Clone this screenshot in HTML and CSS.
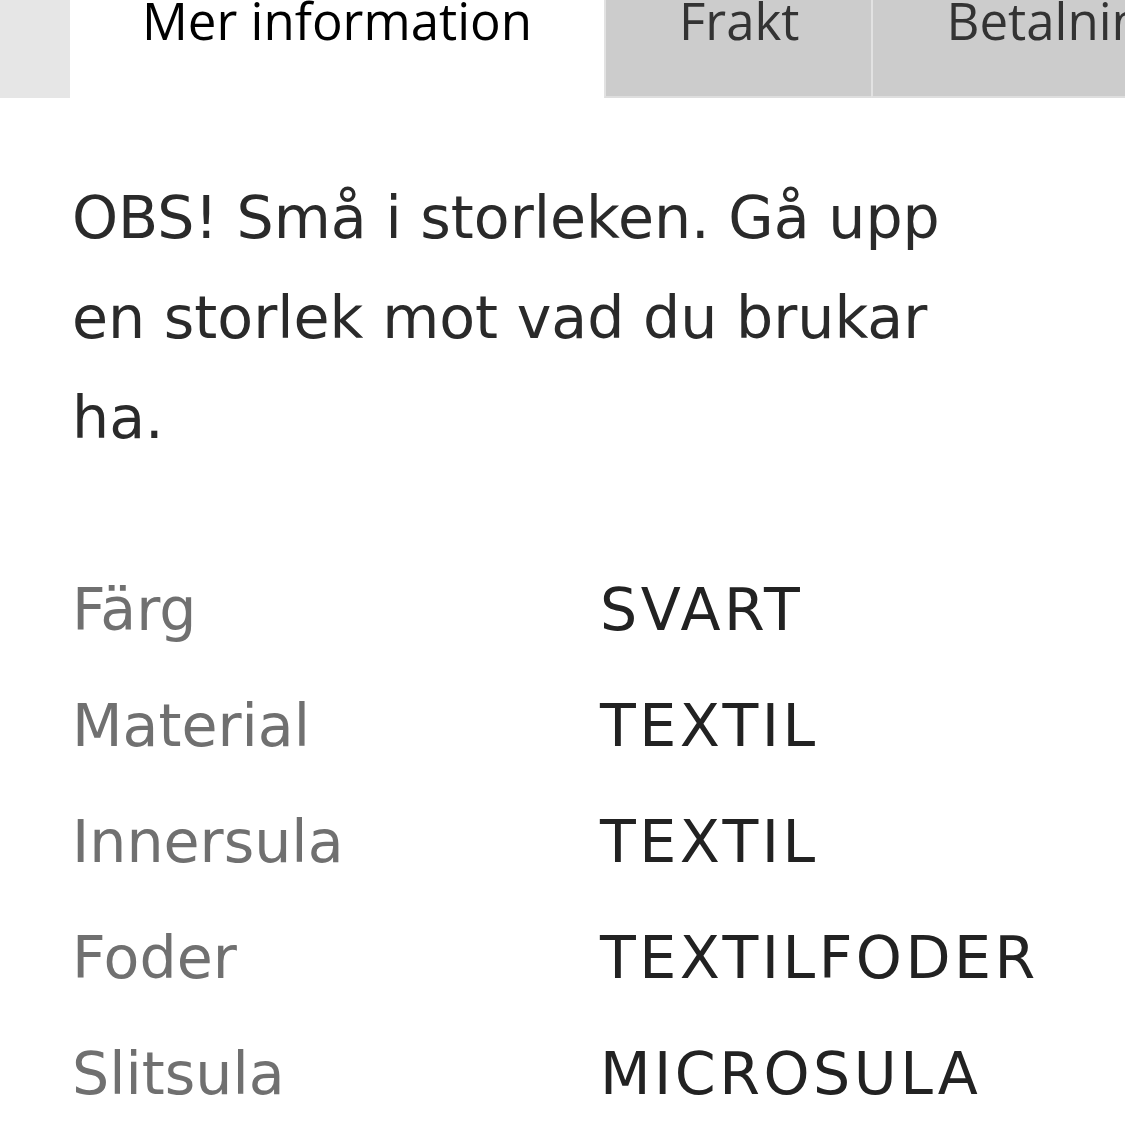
FILE: index.html
```html
<!DOCTYPE html>
<html lang="sv">
<head>
    <meta charset="UTF-8">
    <meta name="viewport" content="width=device-width, initial-scale=1.0">
    <title>Mer information</title>
    <link rel="stylesheet" href="styles.css">
</head>
<body>
    <div class="tabs">
        <div class="tab tab-edge"></div>
        <div class="tab active">Mer information</div>
        <div class="tab">Frakt</div>
        <div class="tab">Betalning</div>
    </div>

    <div class="content">
        <p class="note">OBS! Små i storleken. Gå upp en storlek mot vad du brukar ha.</p>

        <!-- Product attributes -->
        <table class="specs">
            <tr><th>Färg</th><td>SVART</td></tr>
            <tr><th>Material</th><td>TEXTIL</td></tr>
            <tr><th>Innersula</th><td>TEXTIL</td></tr>
            <tr><th>Foder</th><td>TEXTILFODER</td></tr>
            <tr><th>Slitsula</th><td>MICROSULA</td></tr>
        </table>
    </div>
</body>
</html>
```

FILE: styles.css
```css
/* General Body Styles */
body {
    margin: 0;
    padding: 0;
    background: #fff;
    font-family: 'DejaVu Sans', sans-serif;
    color: #2a2a2a;
    overflow: hidden;
}

/* Tabs */
.tabs {
    display: flex;
    height: 98px;
    white-space: nowrap;
    overflow: hidden;
}

.tab {
    flex-shrink: 0;
    box-sizing: border-box;
    height: 98px;
    padding: 0 72px 0 73px;
    font-family: 'Open Sans', sans-serif;
    font-size: 51px;
    line-height: 40px;
    color: #333;
    background-color: #cccccc;
    border-left: 2px solid #e2e2e2;
    border-bottom: 2px solid #dedede;
}

.tab-edge {
    width: 70px;
    padding: 0;
    border-left: none;
    border-bottom: none;
    background-color: #e6e6e6;
}

.tab.active {
    padding: 0 72px;
    background-color: #fff;
    color: #000;
    border-left: none;
    border-bottom: none;
}

/* Content */
.content {
    padding: 0 72px;
}

.note {
    margin: 70px 0 0;
    max-width: 900px;
    font-size: 58.6px;
    line-height: 100px;
}

.specs {
    margin-top: 84px;
    border-collapse: collapse;
    font-size: 58.6px;
}

.specs th,
.specs td {
    height: 116px;
    padding: 0;
    text-align: left;
    vertical-align: middle;
}

.specs th {
    width: 528px;
    font-weight: normal;
    color: #707070;
}

.specs td {
    color: #222;
    letter-spacing: 3.5px;
}
```
